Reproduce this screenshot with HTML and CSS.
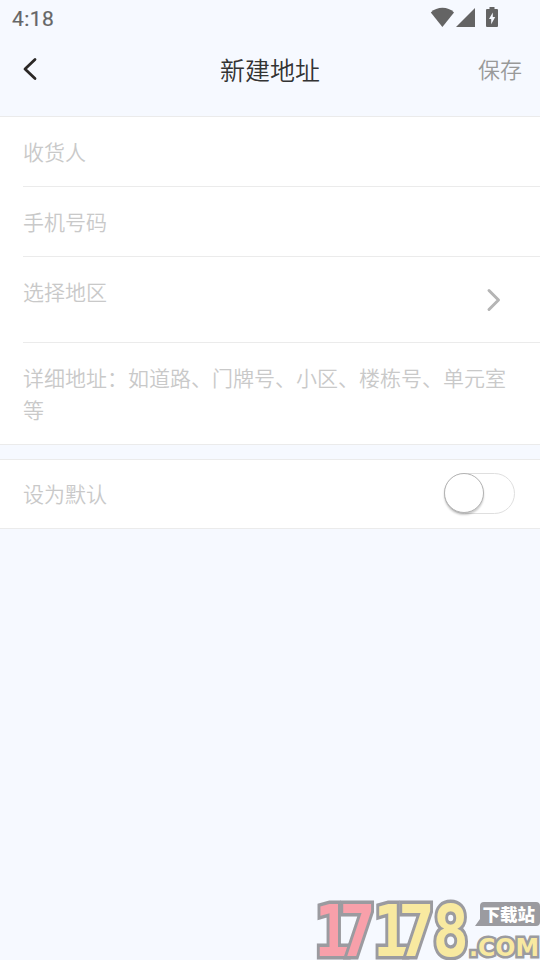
FILE: index.html
```html
<!DOCTYPE html>
<html lang="zh-CN">
<head>
<meta charset="utf-8">
<title>新建地址</title>
<link rel="stylesheet" href="styles.css">
</head>
<body>
<div class="status">
  <span class="time">4:18</span>
  <svg class="status-icons" width="70" height="28" viewBox="0 0 70 28">
    <path d="M.8 12.500C7 6.300 18 6.300 24 12.500L12.400 27Z"/>
    <path d="M26 27H45V8Z"/>
    <path fill-rule="evenodd" d="M59.500 7h5v2H67q1 0 1 1v16q0 1-1 1H57q-1 0-1-1V10q0-1 1-1h2.500ZM62.800 12.500 59 19h2.200v5.200L65.200 17H62.800Z"/>
  </svg>
</div>
<header class="nav">
  <svg class="back" width="16" height="24" viewBox="0 0 16 24"><path d="M13 2.500 3 12l10 9.500"/></svg>
  <h1>新建地址</h1>
  <a class="save">保存</a>
</header>
<main>
  <section class="group">
    <div class="row"><span>收货人</span></div>
    <div class="row"><span>手机号码</span></div>
    <div class="row region"><span>选择地区</span><svg class="arrow" width="16" height="24" viewBox="0 0 16 24"><path d="M3 2.500 12.500 12 3 21.500"/></svg></div>
    <div class="row detail"><span>详细地址：如道路、门牌号、小区、楼栋号、单元室等</span></div>
  </section>
  <section class="group default">
    <span>设为默认</span>
    <div class="switch"><i></i></div>
  </section>
</main>
<div class="watermark">
  <svg width="230" height="64" viewBox="310 896 230 64">
    <g class="digits" transform="scale(.84 1)">
      <text y="956"><tspan class="pink" x="374 404">17</tspan><tspan class="yellow" x="444 474 515">178</tspan></text>
    </g>
    <path class="bubble" d="M484 902h52q4 0 4 4v16q0 4-4 4H475l5-7v-13q0-4 4-4Z"/>
    <text class="site" x="482.500" y="921">下载站</text>
    <text class="com" x="469" y="956" textLength="70" lengthAdjust="spacingAndGlyphs">.COM</text>
  </svg>
</div>
</body>
</html>
```
FILE: styles.css
```css
* { box-sizing: border-box; }
body {
  margin: 0;
  height: 960px;
  overflow: hidden;
  background: #f6f9ff;
  color: #c9c9c9;
  font: 350 21px/32px "Noto Sans CJK SC", sans-serif;
}
.status {
  height: 37px;
  padding: 0 40px 0 12px;
  display: flex;
  justify-content: space-between;
}
.time {
  font: 400 21px/38px Roboto, sans-serif;
  color: #666;
  letter-spacing: .4px;
  -webkit-text-stroke: .2px #666;
}
.status-icons { fill: #646464; }
.nav {
  height: 79px;
  padding: 0 18px 15px 22px;
  display: grid;
  grid-template-columns: 1fr auto 1fr;
  align-items: center;
}
.nav h1 { margin: 0 4px 0 0; font-size: 25px; font-weight: 350; color: #333; }
.save { justify-self: end; padding-bottom: 3px; font-size: 22px; color: #999; }
.back, .arrow { fill: none; stroke-linecap: round; stroke-linejoin: round; }
.back { stroke: #2b2826; stroke-width: 2.8; }
.group {
  background: #fff;
  border: solid #ebebeb;
  border-width: 1px 0;
  padding-left: 23px;
}
.row {
  height: 70px;
  padding: 18px 32px 0 0;
  border-bottom: 1px solid #ebebeb;
  display: flex;
  justify-content: space-between;
}
.region { height: 86px; padding-right: 38px; }
.arrow { stroke: #b5b5b5; stroke-width: 3; margin-top: 13px; }
.detail { height: 101px; border-bottom: 0; }
.default {
  height: 70px;
  margin-top: 14px;
  padding: 0 25px 2px 23px;
  display: flex;
  align-items: center;
  justify-content: space-between;
}
.switch {
  width: 71px;
  height: 41px;
  border: 1px solid #dfdfdf;
  border-radius: 21px;
}
.switch i {
  display: block;
  width: 40px;
  height: 40px;
  margin: -1px 0 0 -1px;
  border: 1px solid #b3b3b3;
  border-radius: 50%;
  background: #fff;
  box-shadow: 0 2px 2px #0003;
}
.watermark { position: absolute; right: 0; bottom: 0; height: 64px; }
.watermark text { paint-order: stroke; stroke: #9b9ba0; stroke-linejoin: miter; }
.digits text { font: bold 72px "DejaVu Sans Mono", monospace; stroke-width: 7px; }
.pink { fill: #f8a0aa; }
.yellow, .com { fill: #f8e9a0; }
.bubble { fill: #9b9ba0; }
.watermark .site { font: 900 17.500px "Noto Sans CJK SC", sans-serif; fill: #fff; stroke: none; }
.watermark .com { font: bold 24px "DejaVu Sans", sans-serif; stroke-width: 5px; }
```
